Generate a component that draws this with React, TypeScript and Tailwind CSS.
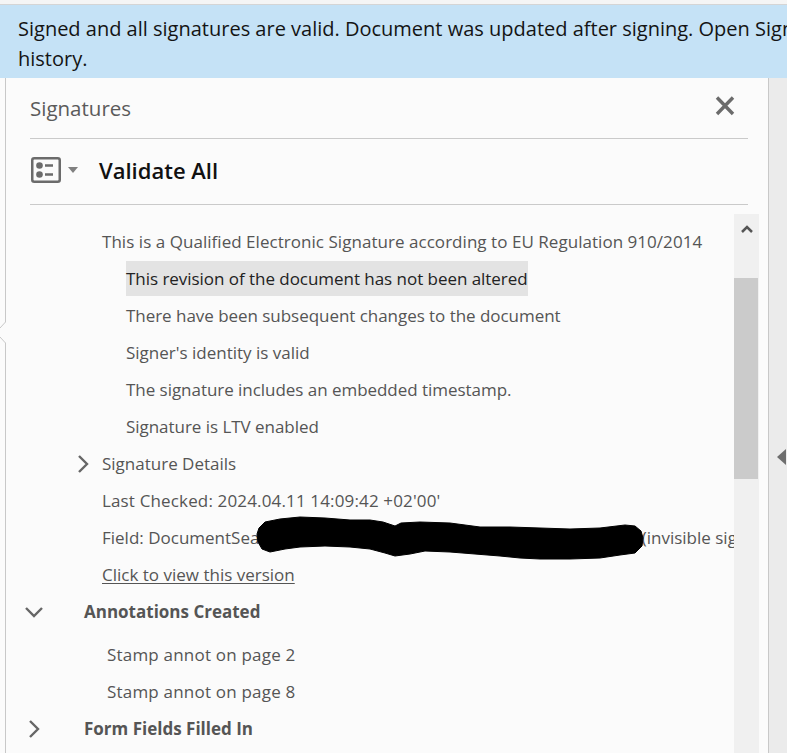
const F = "font-['Open_Sans','Noto_Sans',sans-serif]";

function Row({ indent, children, className = "" }: { indent: string; children: React.ReactNode; className?: string }) {
  return (
    <div className={`flex h-[37px] shrink-0 items-center whitespace-nowrap ${indent} ${className}`}>{children}</div>
  );
}

function Chevron({ down = false }: { down?: boolean }) {
  return (
    <svg width="20" height="20" viewBox="0 0 20 20" fill="none" stroke="#666" strokeWidth="2.4" className="shrink-0">
      {down ? <path d="M2 6 L10 14 L18 6" /> : <path d="M6 2 L14 10 L6 18" />}
    </svg>
  );
}

const REDACTION =
  "M257 534 L259 528 L265 522 L280 519 L300 517 L325 518 L350 520 L370 520 L383 522 L395 526 L401 523 L420 522 L450 523 L465 525 L480 527 L510 527 L540 528 L570 529 L600 528 L625 525 L635 526 L641 531 L643 538 L642 546 L635 553 L620 555 L600 558 L570 559 L540 559 L520 558 L500 556 L475 554 L450 552 L425 551 L410 554 L395 556 L385 553 L370 549 L350 547 L325 546 L300 547 L285 549 L270 552 L262 549 L258 542 Z";

export default function App() {
  return (
    <div className={`${F} relative flex h-[753px] w-[787px] flex-col overflow-hidden bg-[#fbfbfb] text-[#4b4b4b]`}>
      <div className="h-[5px] shrink-0 border-b border-[#d5d5d5] bg-[#f5f5f5]" />
      <div className="h-[73px] shrink-0 overflow-hidden whitespace-nowrap bg-[#c5e2f6] pl-[18px] pt-[9px] text-[20px] leading-[30px] text-[#141414]">
        <div>Signed and all signatures are valid. Document was updated after signing. Open Signature Panel for more</div>
        <div>history.</div>
      </div>
      <div className="flex min-h-0 flex-1">
        <div className="w-[6px] shrink-0 border-r border-[#c8c8c8] bg-[#fbfbfb]" />
        <div className="flex w-[762px] shrink-0 flex-col">
          <div className="ml-[24px] mr-[20px] flex h-[61px] shrink-0 items-center justify-between border-b border-[#cacaca] pr-[13px]">
            <span className="text-[20.500px] text-[#5a5a5a]">Signatures</span>
            <svg width="20" height="20" viewBox="0 0 20 20" stroke="#6b6b6b" strokeWidth="3.400" fill="none" className="mb-[4px]">
              <path d="M2 1.500 L18 18 M18 1.500 L2 18" />
            </svg>
          </div>
          <div className="ml-[24px] mr-[20px] flex h-[66px] shrink-0 items-center border-b border-[#cacaca] pb-[3px] pl-[1px]">
            <svg width="30" height="26" viewBox="0 0 30 26" fill="none">
              <rect x="1.250" y="1.250" width="27.500" height="23.500" rx="2" stroke="#6b6b6b" strokeWidth="2.500" />
              <circle cx="8.500" cy="8.500" r="3.300" fill="#6b6b6b" />
              <circle cx="8.500" cy="17.500" r="3.300" fill="#6b6b6b" />
              <path d="M14 8.500 H22 M14 17.500 H22" stroke="#6b6b6b" strokeWidth="2.500" />
            </svg>
            <svg width="10" height="6" viewBox="0 0 10 6" className="ml-[7px]">
              <path d="M0 0 H10 L5 6 Z" fill="#808080" />
            </svg>
            <span className="ml-[21px] text-[22px] font-semibold text-[#111]">Validate All</span>
          </div>
          <div className="mr-[9px] mt-[9px] flex min-h-0 flex-1">
            <div className="flex min-w-0 flex-1 flex-col overflow-hidden pt-[9px] text-[17px] text-[#555]">
              <Row indent="pl-[96px]" className="tracking-[0.04px]">This is a Qualified Electronic Signature according to EU Regulation 910/2014</Row>
              <Row indent="pl-[120px]" className="tracking-[-0.04px]">
                <span className="bg-[#e3e3e3] py-[5px] text-[#222]">This revision of the document has not been altered</span>
              </Row>
              <Row indent="pl-[120px]" className="tracking-[-0.04px]">There have been subsequent changes to the document</Row>
              <Row indent="pl-[120px]">Signer's identity is valid</Row>
              <Row indent="pl-[120px]" className="tracking-[-0.04px]">The signature includes an embedded timestamp.</Row>
              <Row indent="pl-[120px]" className="tracking-[-0.04px]">Signature is LTV enabled</Row>
              <Row indent="pl-[67px]">
                <Chevron />
                <span className="ml-[9px]">Signature Details</span>
              </Row>
              <Row indent="pl-[96px]" className="tracking-[0.15px]">Last Checked: 2024.04.11 14:09:42 +02'00'</Row>
              <Row indent="pl-[96px]">
                Field: DocumentSeal<span className="ml-[378px]">(invisible signature)</span>
              </Row>
              <Row indent="pl-[96px]"><span className="underline underline-offset-2">Click to view this version</span></Row>
              <Row indent="pl-[18px]" className="font-bold">
                <Chevron down />
                <span className="ml-[40px]">Annotations Created</span>
              </Row>
              <div className="h-[6px] shrink-0" />
              <Row indent="pl-[101px]" className="tracking-[0.2px]">Stamp annot on page 2</Row>
              <Row indent="pl-[101px]" className="tracking-[0.2px]">Stamp annot on page 8</Row>
              <Row indent="pl-[18px]" className="font-bold">
                <Chevron />
                <span className="ml-[40px]">Form Fields Filled In</span>
              </Row>
            </div>
            <div className="flex w-[25px] shrink-0 flex-col bg-[#f0f0f0]">
              <div className="flex h-[64px] justify-center pt-[11px]">
                <svg width="12" height="8" viewBox="0 0 12 8" fill="none" stroke="#555" strokeWidth="2.500">
                  <path d="M1 7 L6 2 L11 7" />
                </svg>
              </div>
              <div className="mr-[1px] h-[201px] bg-[#cbcbcb]" />
            </div>
          </div>
        </div>
        <div className="flex flex-1 items-start border-l border-[#c8c8c8] bg-[#ebebeb] pl-[8px] pt-[371px]">
          <svg width="9" height="16" viewBox="0 0 9 16"><path d="M9 0 V16 L0 8 Z" fill="#6e6e6e" /></svg>
        </div>
      </div>
      {/* notch on the panel edge */}
      <svg className="absolute left-0 top-[316px]" width="8" height="34" viewBox="0 0 8 34" fill="none">
        <path d="M5.500 6 L0 12 V21 L5.500 27 H8 V6 Z" fill="#fbfbfb" />
        <path d="M5.500 0 V6 L0 12 M0 21 L5.500 27 V34" stroke="#c8c8c8" />
      </svg>
      {/* pen redaction drawn over the document */}
      <svg className="absolute left-[250px] top-[510px]" width="400" height="55" viewBox="250 510 400 55">
        <path d={REDACTION} fill="#000" stroke="#000" strokeWidth="1" strokeLinejoin="round" />
      </svg>
    </div>
  );
}
